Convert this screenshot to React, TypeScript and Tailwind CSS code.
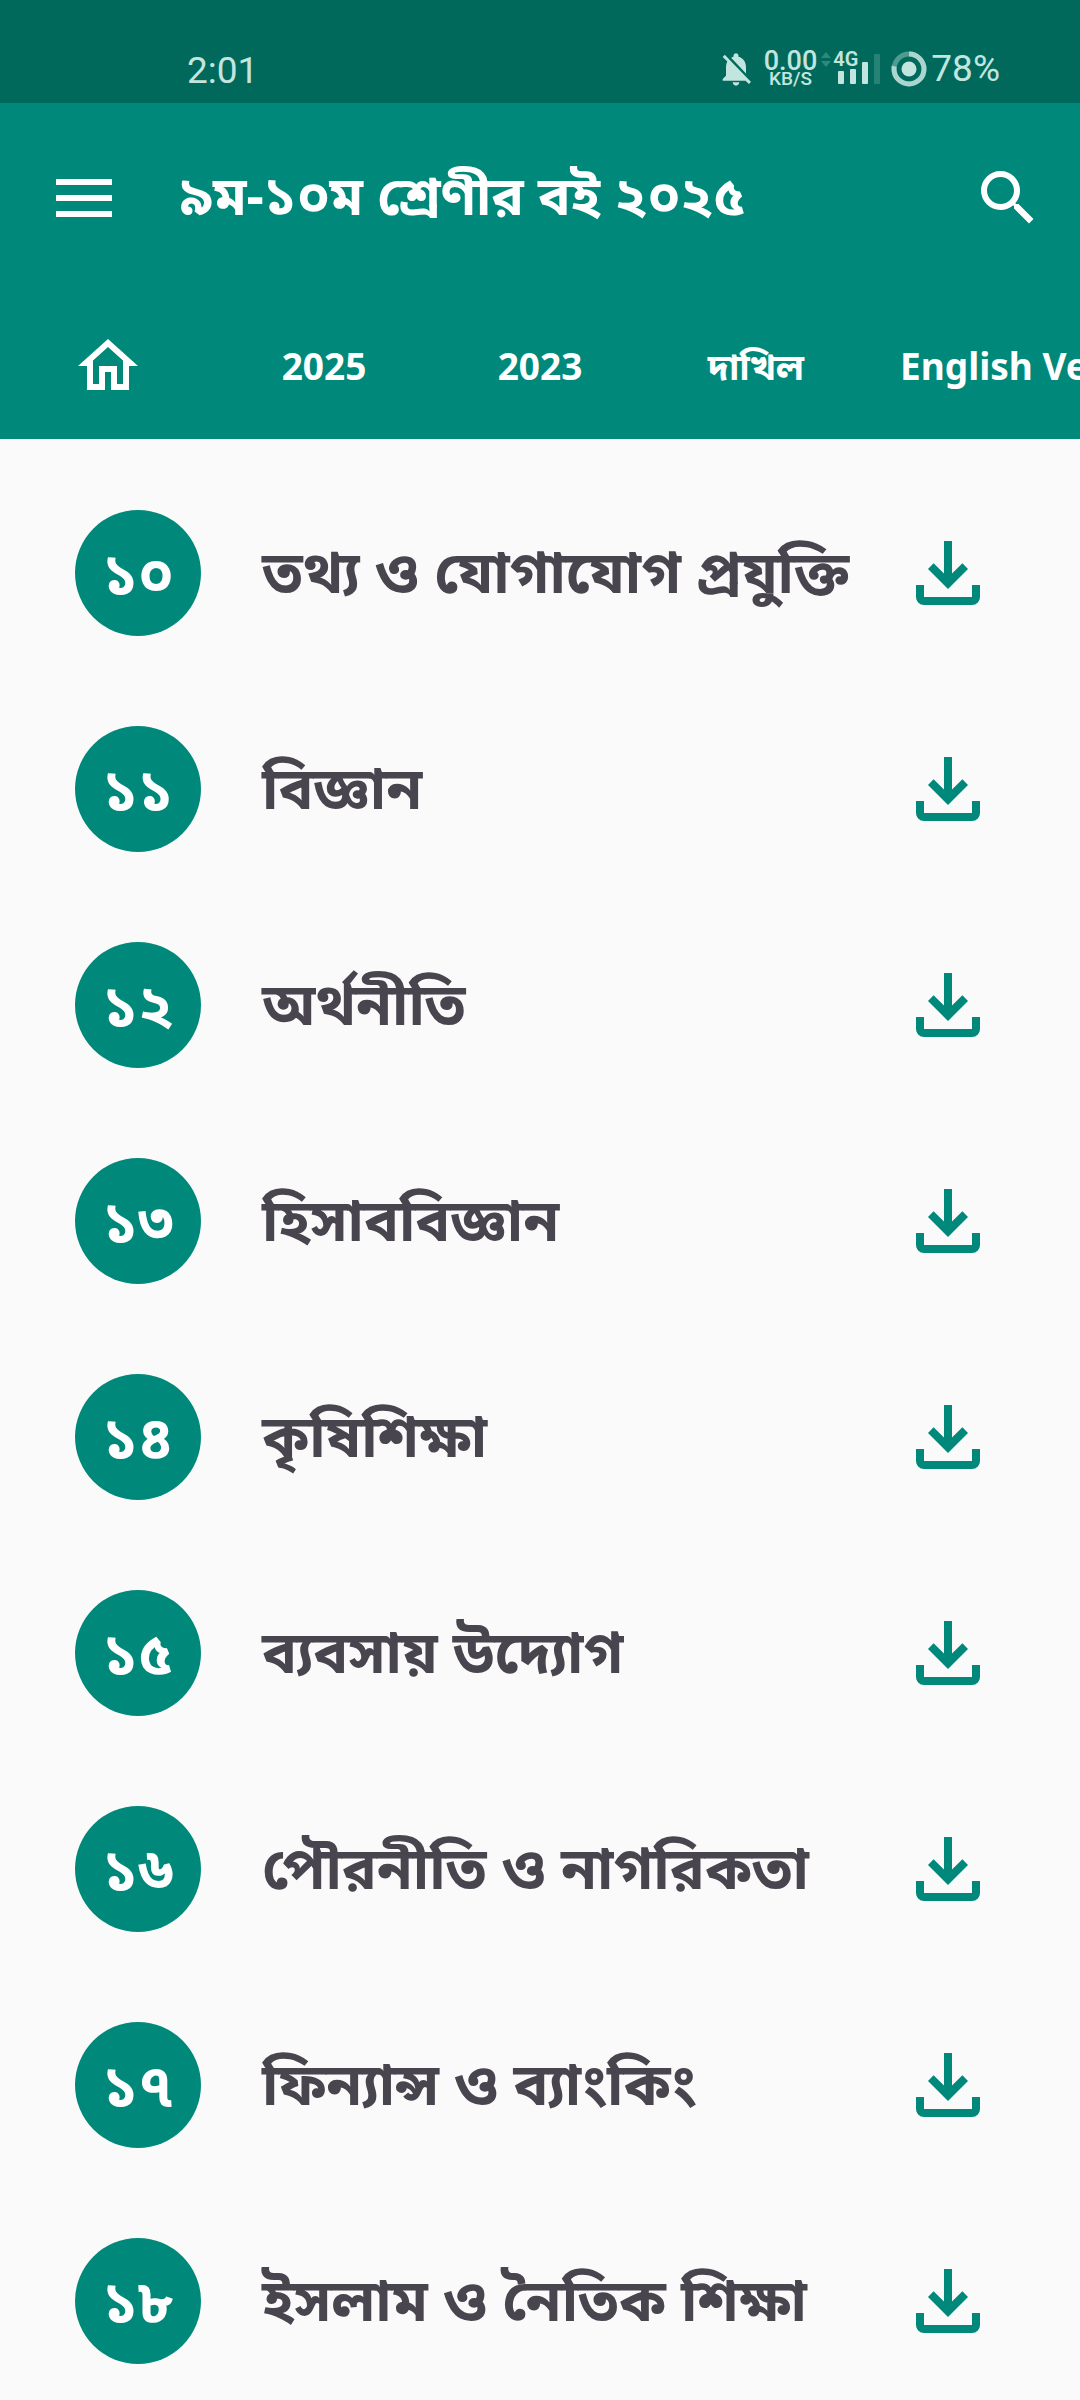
import { useState } from "react";
import { MdNotificationsOff, MdOutlineHome, MdSearch } from "react-icons/md";

const tabs = ["হোম", "2025", "2023", "দাখিল", "English Version"];

const books = [
  { no: "১০", title: "তথ্য ও যোগাযোগ প্রযুক্তি" },
  { no: "১১", title: "বিজ্ঞান" },
  { no: "১২", title: "অর্থনীতি" },
  { no: "১৩", title: "হিসাববিজ্ঞান" },
  { no: "১৪", title: "কৃষিশিক্ষা" },
  { no: "১৫", title: "ব্যবসায় উদ্যোগ" },
  { no: "১৬", title: "পৌরনীতি ও নাগরিকতা" },
  { no: "১৭", title: "ফিন্যান্স ও ব্যাংকিং" },
  { no: "১৮", title: "ইসলাম ও নৈতিক শিক্ষা" },
];

function SignalIcon() {
  return (
    <div className="relative h-9 w-[60px]">
      <svg viewBox="0 0 60 36" className="h-9 w-[60px]" fill="currentColor">
        <path d="M0 7l5-6 5 6zM0 10h10l-5 6z" opacity=".25" />
        <rect x="17" y="20" width="6" height="13" rx="1" />
        <rect x="29" y="18" width="6" height="15" rx="1" />
        <rect x="41" y="11" width="6" height="22" rx="1" />
        <rect x="53" y="3" width="6" height="30" rx="1" opacity=".2" />
      </svg>
      <span className="absolute top-0 left-3 text-[20px] leading-4 font-semibold">4G</span>
    </div>
  );
}

function BatteryIcon() {
  return (
    <svg viewBox="0 0 36 36" className="size-9" fill="none" stroke="currentColor">
      <circle cx="18" cy="18" r="15" strokeWidth="5" opacity=".4" />
      <circle
        cx="18"
        cy="18"
        r="15"
        strokeWidth="5"
        pathLength="100"
        strokeDasharray="78 22"
        transform="rotate(-90 18 18)"
        opacity=".8"
      />
      <circle cx="18" cy="18" r="7.5" fill="currentColor" stroke="none" />
    </svg>
  );
}

function StatusBar() {
  return (
    <div className="flex h-[103px] shrink-0 items-end justify-between bg-[#00695c] pr-20 pb-3.5 pl-[187px] font-[Roboto,sans-serif] text-[#c3e5df]">
      <span className="text-[37px] leading-9">2:01</span>
      <div className="flex items-center">
        <MdNotificationsOff className="mr-2 size-10" />
        <div className="mr-1 flex flex-col items-center font-medium">
          <span className="text-[27px] leading-5">0.00</span>
          <span className="text-[19px] leading-4">KB/S</span>
        </div>
        <SignalIcon />
        <div className="mr-1 ml-2.5">
          <BatteryIcon />
        </div>
        <span className="text-[37px] leading-9">78%</span>
      </div>
    </div>
  );
}

function DownloadIcon() {
  return (
    <svg viewBox="0 0 24 24" className="size-24" fill="currentColor">
      <path d="M12 16l-5-5 1.4-1.45 2.6 2.6V4h2v8.15l2.6-2.6L17 11l-5 5zm-6 4q-.825 0-1.412-.587T4 18v-3h2v3h12v-3h2v3q0 .825-.587 1.413T18 20H6z" />
    </svg>
  );
}

export default function App() {
  const [active, setActive] = useState("হোম");

  return (
    <div className="flex h-screen flex-col bg-[#fafafa] font-['Noto_Sans','Noto_Sans_Bengali',sans-serif]">
      <StatusBar />

      <header className="shrink-0 bg-[#00897b] text-white">
        <div className="flex h-[190px] items-center pr-9 pl-14">
          <button type="button" aria-label="মেনু">
            <svg viewBox="0 0 56 38" className="h-[38px] w-14" fill="currentColor">
              <path d="M0 0h56v6H0zM0 16h56v6H0zM0 32h56v6H0z" />
            </svg>
          </button>
          <h1 className="ml-[68px] flex-1 pb-2 text-[54px] leading-[72px] font-bold whitespace-nowrap">৯ম-১০ম শ্রেণীর বই ২০২৫</h1>
          <button type="button" aria-label="খুঁজুন">
            <MdSearch className="size-[72px]" />
          </button>
        </div>

        <nav className="flex h-[146px] overflow-hidden">
          {tabs.map((tab) => (
            <button
              key={tab}
              type="button"
              aria-label={tab}
              aria-pressed={active === tab}
              onClick={() => setActive(tab)}
              className="flex min-w-[216px] shrink-0 items-center justify-center px-9 text-[37px] font-bold whitespace-nowrap"
            >
              {tab === "হোম" ? <MdOutlineHome className="size-[72px]" /> : tab}
            </button>
          ))}
        </nav>
      </header>

      <ul className="flex-1 overflow-y-auto pt-[26px] [scrollbar-width:none]">
        {books.map((book) => (
          <li key={book.no} className="flex h-[216px] items-center pr-[84px] pl-[75px]">
            <span className="flex size-[126px] shrink-0 items-center justify-center rounded-full bg-[#00897b] pb-1 text-[58px] font-bold text-white">
              {book.no}
            </span>
            <span className="ml-[61px] flex-1 pb-1 text-[58px] leading-[84px] font-bold whitespace-nowrap text-[#49454f]">{book.title}</span>
            <button type="button" aria-label={`${book.title} ডাউনলোড`} className="text-[#00897b]">
              <DownloadIcon />
            </button>
          </li>
        ))}
      </ul>
    </div>
  );
}
